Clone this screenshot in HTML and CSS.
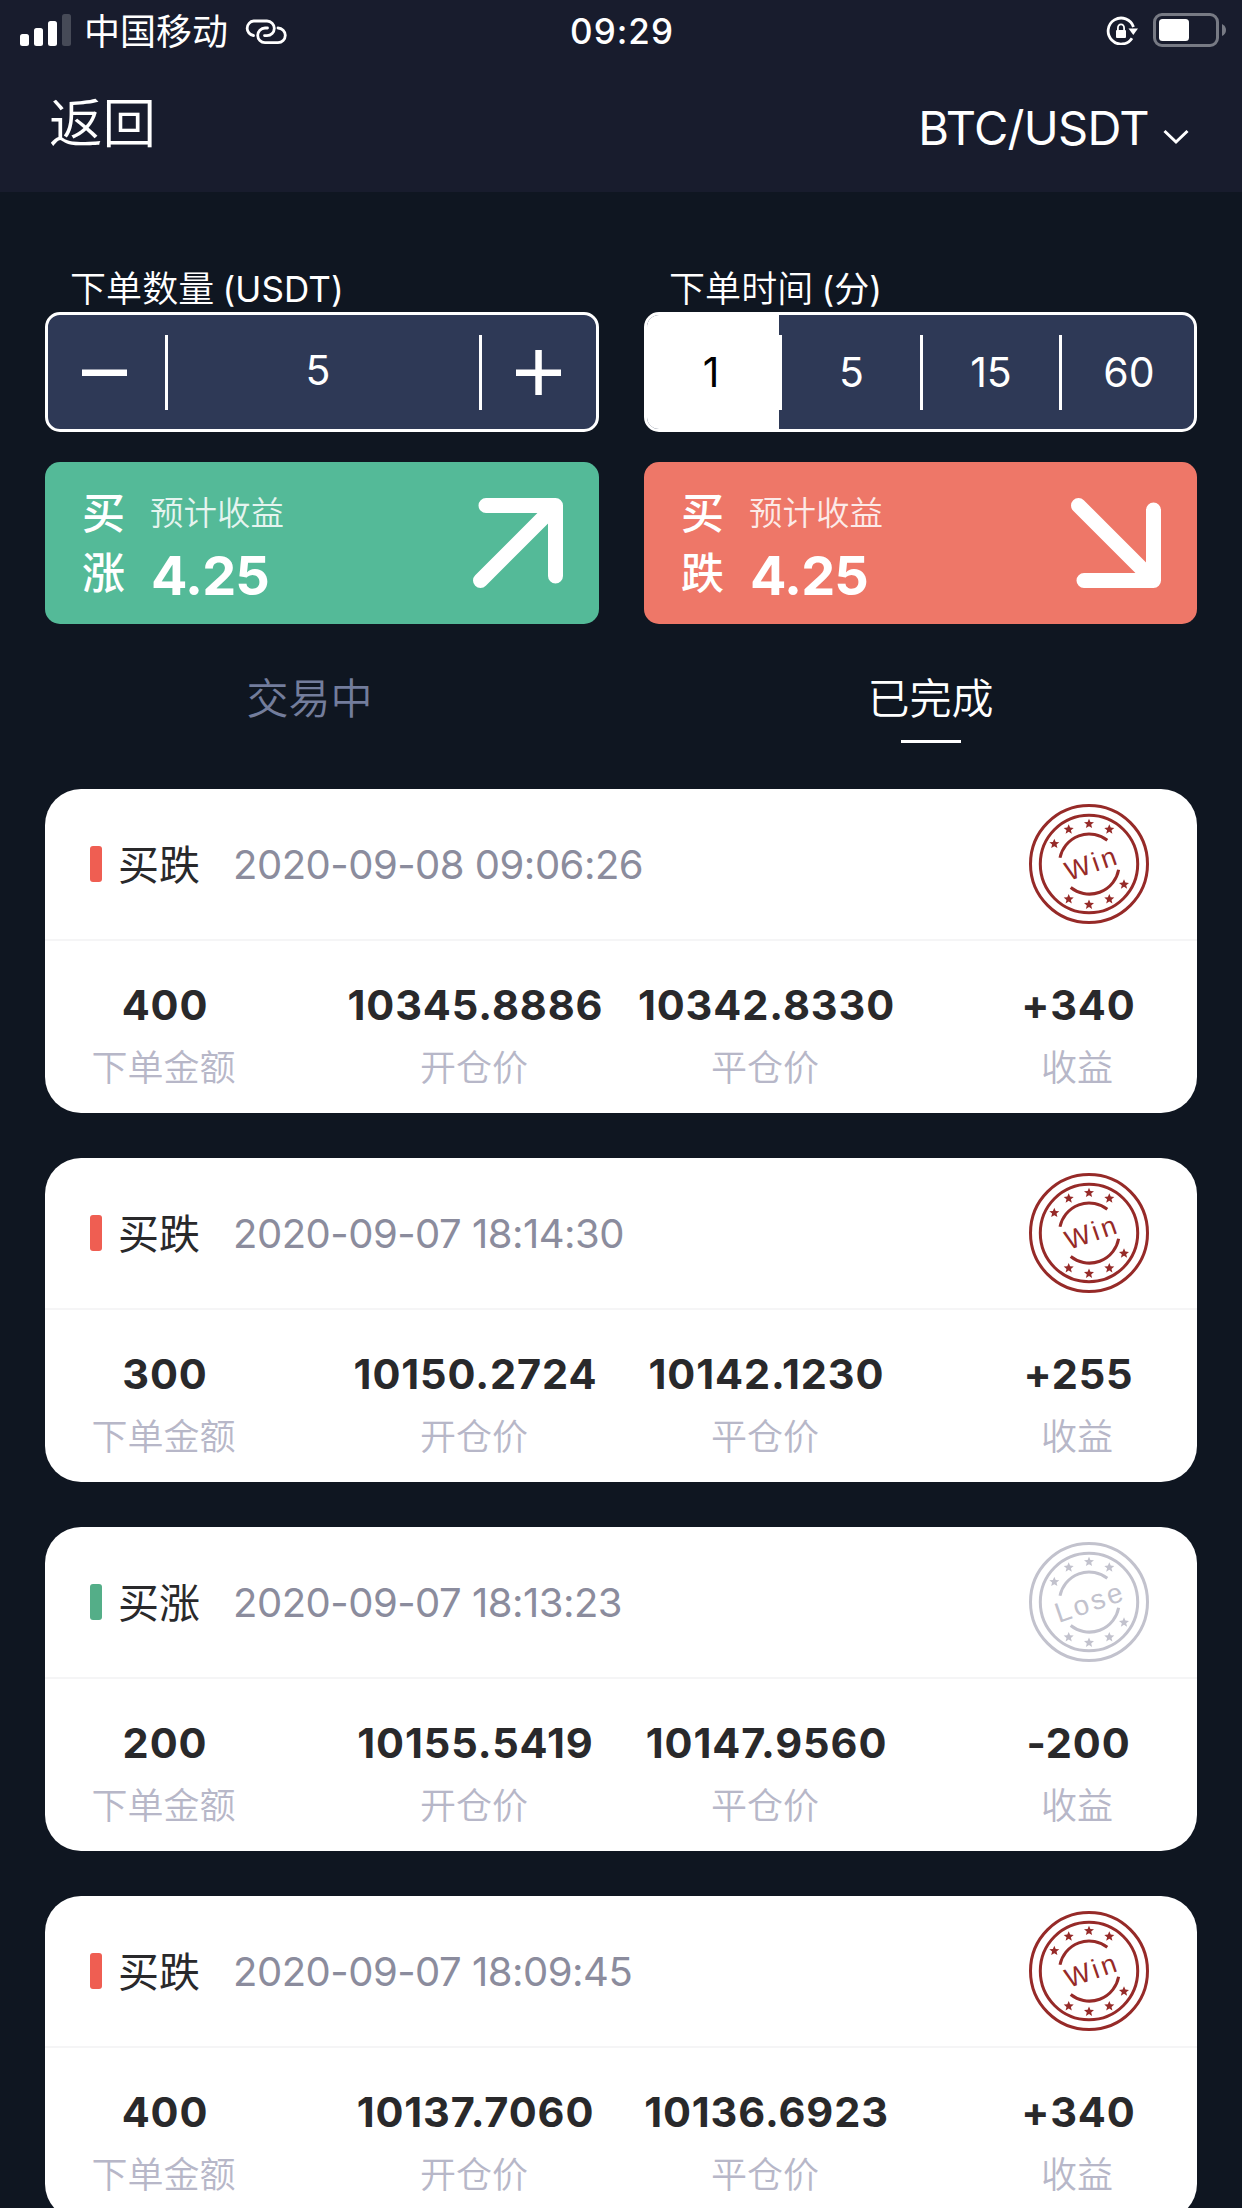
FILE: index.html
```html
<!DOCTYPE html>
<html lang="zh-CN">
<head>
<meta charset="utf-8">
<title>BTC/USDT</title>
<link rel="stylesheet" href="styles.css">
</head>
<body>
<svg class="defs" width="0" height="0">
  <defs>
    <path id="star" d="M0-5 1.4-1.7 5-1.4 2.2.9 3.1 4.4 0 2.5-3.1 4.4-2.2.9-5-1.4-1.4-1.7Z"/>
    <g id="stamp">
      <g fill="none" stroke="currentColor" stroke-width="3">
        <circle r="58.5"/>
        <circle r="48.7"/>
        <path d="M-29-6.3A29.7 29.7 0 0 1 18.3-23.7M-18.3 23.5A29.7 29.7 0 0 0 29.6 5.7"/>
      </g>
      <g fill="currentColor">
        <use href="#star" x="-34.7" y="-20.3"/><use href="#star" x="-20.3" y="-34.7"/>
        <use href="#star" x="0" y="-40.3"/><use href="#star" x="20.3" y="-34.7"/>
        <use href="#star" x="-20.3" y="35"/><use href="#star" x="0" y="40.5"/>
        <use href="#star" x="20.3" y="35"/><use href="#star" x="35" y="20.3"/>
      </g>
    </g>
  </defs>
</svg>
<header class="top">
  <div class="status">
    <div class="status-left">
      <svg width="51" height="32" viewBox="0 0 51 32" fill="#fff"><rect y="20" width="9" height="12" rx="2.5"/><rect x="14" y="14" width="9" height="18" rx="2.5"/><rect x="28" y="7" width="9" height="25" rx="2.5"/><rect x="42" width="9" height="32" rx="2.5" fill="#464a57"/></svg>
      <span class="carrier">中国移动</span>
      <svg class="link" width="42" height="26" viewBox="0 0 42 26" fill="none" stroke="#fff" stroke-width="2.8" stroke-linecap="round"><path d="M8.500 16.500A7.300 7.300 0 0 1 8.700 2H22A7.300 7.300 0 0 1 22 16.600H19.500"/><path d="M33 9A7.300 7.300 0 0 1 33 23.600H20A7.300 7.300 0 0 1 20 9H22.500"/></svg>
    </div>
    <span class="clock">09:29</span>
    <div class="status-right">
      <svg width="34" height="32" viewBox="0 0 34 32"><path d="M26 25.200A13 13 0 1 1 27.500 14" fill="none" stroke="#fff" stroke-width="2.800"/><path d="M22.500 15.500H32L27.300 22Z" fill="#fff"/><rect x="10" y="17" width="10" height="8" rx="1" fill="#fff"/><path d="M11.900 17.500V15A3.100 3.600 0 0 1 18.100 15V17.500" fill="none" stroke="#fff" stroke-width="1.800"/></svg>
      <svg width="74" height="34" viewBox="0 0 74 34"><rect x="1.500" y="1.500" width="63" height="31" rx="7.500" fill="none" stroke="#777a84" stroke-width="3"/><rect x="6" y="6" width="30" height="22" rx="3.500" fill="#fff"/><path d="M69 11Q73 13 73 17T69 23Z" fill="#777a84"/></svg>
    </div>
  </div>
  <nav class="nav">
    <span class="back">返回</span>
    <span class="pair">BTC/USDT<svg width="26" height="16" viewBox="0 0 26 16" fill="none" stroke="#fff" stroke-width="3"><path d="M1.500 2 13 13 24.500 2"/></svg></span>
  </nav>
</header>
<main>
  <section class="order">
    <div class="field">
      <label class="label">下单数量<i>(USDT)</i></label>
      <div class="box stepper">
        <svg width="45" height="45" viewBox="0 0 45 45" fill="#fff"><path d="M0 19.500h45v6.500H0z"/></svg>
        <span class="amount">5</span>
        <svg width="45" height="45" viewBox="0 0 45 45" fill="#fff"><path d="M0 19.500h45v6.500H0zM19.300 0h6.500v45h-6.500z"/></svg>
      </div>
    </div>
    <div class="field">
      <label class="label">下单时间<i>(分)</i></label>
      <div class="box times"><span class="on">1</span><span>5</span><span>15</span><span>60</span></div>
    </div>
    <div class="trade up">
      <span class="side">买<br>涨</span>
      <div class="profit"><span>预计收益</span><b>4.25</b></div>
      <svg width="90" height="90" viewBox="0 0 90 90" fill="none" stroke="#fff" stroke-width="15" stroke-linecap="round" stroke-linejoin="round"><path d="M13 7.500H82.500V78M7.500 82.500 82.500 7.500"/></svg>
    </div>
    <div class="trade down">
      <span class="side">买<br>跌</span>
      <div class="profit"><span>预计收益</span><b>4.25</b></div>
      <svg width="90" height="90" viewBox="0 0 90 90" fill="none" stroke="#fff" stroke-width="15" stroke-linecap="round" stroke-linejoin="round"><path d="M13 82.500H82.500V12M7.500 7.500 82.500 82.500"/></svg>
    </div>
  </section>
  <div class="tabs"><span>交易中</span><span class="active">已完成</span></div>
  <section class="list">
    <article class="card">
      <div class="head"><i class="mark"></i><span class="dir">买跌</span><time>2020-09-08 09:06:26</time><svg class="stamp win" viewBox="-60 -60 120 120"><use href="#stamp"/><text x="3" y="9.500" transform="rotate(-19)">Win</text></svg></div>
      <div class="stats"><div><b>400</b><span>下单金额</span></div><div><b>10345.8886</b><span>开仓价</span></div><div><b>10342.8330</b><span>平仓价</span></div><div><b>+340</b><span>收益</span></div></div>
    </article>
    <article class="card">
      <div class="head"><i class="mark"></i><span class="dir">买跌</span><time>2020-09-07 18:14:30</time><svg class="stamp win" viewBox="-60 -60 120 120"><use href="#stamp"/><text x="3" y="9.500" transform="rotate(-19)">Win</text></svg></div>
      <div class="stats"><div><b>300</b><span>下单金额</span></div><div><b>10150.2724</b><span>开仓价</span></div><div><b>10142.1230</b><span>平仓价</span></div><div><b>+255</b><span>收益</span></div></div>
    </article>
    <article class="card">
      <div class="head"><i class="mark green"></i><span class="dir">买涨</span><time>2020-09-07 18:13:23</time><svg class="stamp lose" viewBox="-60 -60 120 120"><use href="#stamp"/><text x="1" y="10" transform="rotate(-19)">Lose</text></svg></div>
      <div class="stats"><div><b>200</b><span>下单金额</span></div><div><b>10155.5419</b><span>开仓价</span></div><div><b>10147.9560</b><span>平仓价</span></div><div><b>-200</b><span>收益</span></div></div>
    </article>
    <article class="card">
      <div class="head"><i class="mark"></i><span class="dir">买跌</span><time>2020-09-07 18:09:45</time><svg class="stamp win" viewBox="-60 -60 120 120"><use href="#stamp"/><text x="3" y="9.500" transform="rotate(-19)">Win</text></svg></div>
      <div class="stats"><div><b>400</b><span>下单金额</span></div><div><b>10137.7060</b><span>开仓价</span></div><div><b>10136.6923</b><span>平仓价</span></div><div><b>+340</b><span>收益</span></div></div>
    </article>
  </section>
</main>
</body>
</html>
```
FILE: styles.css
```css
* { box-sizing: border-box; }
body {
  margin: 0;
  height: 2208px;
  overflow: hidden;
  background: #0f1621;
  color: #fff;
  font-family: Inter, "Noto Sans CJK SC", sans-serif;
}
i { font-style: normal; }
svg { display: block; flex: none; }
.defs { position: absolute; }

.top { height: 192px; background: #181c2d; }
.status { height: 60px; padding: 0 15px 0 20px; display: grid; grid-template-columns: 1fr auto 1fr; }
.status-left { display: flex; align-items: flex-start; padding-top: 14px; }
.carrier { margin-left: 13px; font-size: 36px; line-height: 36px; }
.link { margin: 5px 0 0 17px; }
.clock { font-size: 35px; line-height: 63px; font-weight: 550; letter-spacing: 1px; margin-right: 3px; }
.status-right { display: flex; justify-content: flex-end; gap: 13px; padding-top: 13px; }
.nav { display: flex; justify-content: space-between; padding: 0 53px 0 49px; }
.back { font-size: 53.5px; line-height: 128px; font-weight: 350; }
.pair { display: flex; font-size: 47px; line-height: 135px; letter-spacing: -.7px; }
.pair svg { margin: 69px 0 0 14px; }

.order { display: grid; grid-template-columns: 554px 553px; column-gap: 45px; row-gap: 30px; padding: 72px 45px 0; }
.label { display: block; height: 48px; padding-left: 25px; font-size: 36px; line-height: 50px; font-weight: 350; letter-spacing: .1px; }
.label i { margin-left: 8px; font-size: 35px; font-weight: 400; }
.box { height: 120px; border: 3px solid #fff; border-radius: 15px; background: #2e3956; font-size: 41px; display: flex; align-items: center; overflow: hidden; }
.stepper { padding: 0 35px 0 34px; }
.amount { flex: 1; height: 75px; margin: 0 34px 0 38px; border: solid #fff; border-width: 0 3px; text-align: center; line-height: 70px; padding-right: 11px; }
.times { display: grid; grid-template-columns: 135px 141px 139px 1fr; }
.times span { height: 75px; line-height: 75px; text-align: center; border-right: 3px solid #fff; }
.times span:last-child { border: 0; padding-left: 2px; }
.times .on { height: 114px; line-height: 115px; background: #fff; color: #000; padding-right: 4px; width: 132px; border: 0; }
.times span:nth-child(2) { border-left: 3px solid #fff; margin-left: -3px; padding-left: 1px; }
.trade { height: 162px; border-radius: 15px; padding: 21px 36px; display: flex; color: #fff; }
.up { background: #54ba98; }
.down { background: #ee7768; }
.side { margin-left: 1px; width: 44px; font-size: 43px; line-height: 60px; font-weight: 500; }
.profit { margin-left: 24px; flex: 1; display: flex; flex-direction: column; }
.profit span { font-size: 33.500px; line-height: 60px; font-weight: 350; opacity: .85; }
.profit b { margin-left: 1px; font-size: 54px; line-height: 66px; font-weight: 700; letter-spacing: -.8px; }
.trade svg { margin-top: 15px; }

.tabs { display: grid; grid-template-columns: 619px 623px; height: 165px; font-size: 42px; line-height: 150px; }
.tabs span { text-align: center; color: #737d9c; font-weight: 350; }
.tabs .active { color: #fff; display: flex; flex-direction: column; align-items: center; }
.tabs .active::after { content: ""; width: 60px; height: 3px; margin-top: -34px; background: #fff; }

.list { display: flex; flex-direction: column; gap: 45px; padding: 0 45px; }
.card { height: 324px; flex: none; border-radius: 36px; background: #fff; color: #29292b; }
.head { height: 152px; border-bottom: 2px solid #f5f5f6; padding: 0 48px 0 45px; display: flex; align-items: center; }
.mark { width: 12px; height: 36px; border-radius: 3px; background: #ef5e52; }
.mark.green { background: #54ae88; }
.dir { margin-left: 16px; font-size: 41px; line-height: 60px; padding-top: 1px; }
time { margin-left: 33px; flex: 1; font-size: 40px; letter-spacing: -.5px; color: #8b8c9d; }
.stamp { width: 120px; height: 120px; }
.stamp text { font: 27px "Liberation Sans", sans-serif; text-anchor: middle; letter-spacing: 3px; fill: currentColor; }
.win { color: #962a28; }
.lose { color: #c2c2cd; }
.lose text { font-size: 28px; }
.stats { display: grid; grid-template-columns: 237px 47px 290px 292px 46px 240px; padding-top: 33px; }
.stats div { text-align: center; white-space: nowrap; }
.stats div:nth-child(2) { grid-column: 3; }
.stats div:last-child { grid-column: 6; }
.stats b, .stats span { display: block; }
.stats b { padding-left: 3px; font-size: 41.500px; line-height: 62px; font-weight: 700; letter-spacing: .9px; }
.stats span { font-size: 36px; line-height: 64px; font-weight: 350; color: #b7b7c8; }
```
